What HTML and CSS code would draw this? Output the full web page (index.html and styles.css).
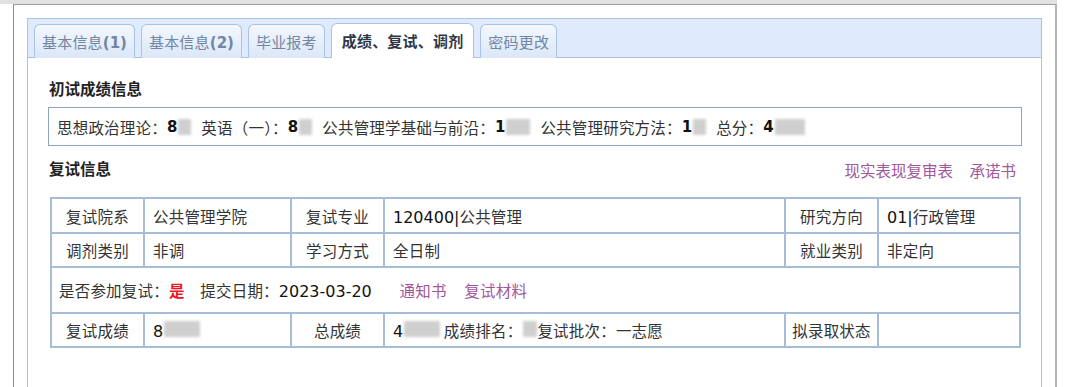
FILE: index.html
```html
<!DOCTYPE html>
<html>
<head>
  <title>成绩、复试、调剂</title>
  <meta charset="utf-8">
  <link rel="stylesheet" href="styles.css">
</head>
<body>
  <div class="topband"></div>
  <div class="frame">
    <div class="panel">
      <div class="tabs">
        <div class="tab">基本信息<span class="num">(1)</span></div>
        <div class="tab">基本信息<span class="num">(2)</span></div>
        <div class="tab">毕业报考</div>
        <div class="tab active">成绩、复试、调剂</div>
        <div class="tab">密码更改</div>
      </div>

      <div class="content">
        <div class="heading">初试成绩信息</div>
        <div class="scores">
          <span class="item">思想政治理论：<b class="digit">8</b><i class="blur w1"></i></span>
          <span class="item">英语（一）：<b class="digit">8</b><i class="blur w1"></i></span>
          <span class="item">公共管理学基础与前沿：<b class="digit">1</b><i class="blur w2"></i></span>
          <span class="item">公共管理研究方法：<b class="digit">1</b><i class="blur w1"></i></span>
          <span class="item">总分：<b class="digit">4</b><i class="blur w3"></i></span>
        </div>

        <div class="section-row">
          <div class="heading">复试信息</div>
          <div class="links">
            <a href="#">现实表现复审表</a>
            <a href="#">承诺书</a>
          </div>
        </div>

        <table class="info">
          <colgroup>
            <col class="c1"><col class="c2"><col class="c3">
            <col class="c4"><col class="c5"><col class="c6">
          </colgroup>
          <tr class="r1">
            <th>复试院系</th>
            <td>公共管理学院</td>
            <th>复试专业</th>
            <td><span class="code">120400|</span>公共管理</td>
            <th>研究方向</th>
            <td><span class="code">01|</span>行政管理</td>
          </tr>
          <tr class="r2">
            <th>调剂类别</th>
            <td>非调</td>
            <th>学习方式</th>
            <td>全日制</td>
            <th>就业类别</th>
            <td>非定向</td>
          </tr>
          <tr class="wide">
            <td colspan="6">
              是否参加复试：<span class="yes">是</span>
              <span class="gap">提交日期：<span class="code">2023-03-20</span></span>
              <a href="#" class="gap2">通知书</a>
              <a href="#" class="gap3">复试材料</a>
            </td>
          </tr>
          <tr class="r4">
            <th>复试成绩</th>
            <td><span class="code">8</span><i class="blur w4"></i></td>
            <th>总成绩</th>
            <td><span class="code">4</span><i class="blur w4"></i> 成绩排名：<i class="blur w5"></i>复试批次：一志愿</td>
            <th>拟录取状态</th>
            <td></td>
          </tr>
        </table>
      </div>
    </div>
  </div>
</body>
</html>
```

FILE: styles.css
```css
body {
  margin: 0;
  background: #fff;
  font-family: "Noto Sans CJK SC", "Noto Sans", sans-serif;
  color: #333;
}
.topband {
  width: 1057px;
  height: 4px;
  background: #e2e2e2;
}
.frame {
  margin-left: 13px;
  width: 1044px;
  height: 383px;
  border: 1px solid #a0a0a0;
  border-left-color: #8c8c8c;
  border-right: 2px solid #b4b4b4;
  border-bottom: none;
  padding: 13px 0 0 13px;
  box-sizing: border-box;
}
.panel {
  width: 1015px;
  height: 370px;
  border: 1px solid #a9c3e6;
  border-bottom: none;
  box-sizing: border-box;
}
.tabs {
  height: 38px;
  background: #dfeafc;
  border-bottom: 1px solid #a9c3e6;
  display: flex;
  align-items: flex-end;
  padding-left: 6px;
  gap: 6px;
}
.tab {
  height: 33px;
  margin-bottom: -1px;
  padding: 0 7px;
  border: 1px solid #a9c3e6;
  border-bottom: none;
  border-radius: 6px 6px 0 0;
  background: linear-gradient(#f3f7fd, #dbe7f8);
  color: #7186a4;
  font-size: 15px;
  line-height: 34px;
  letter-spacing: 0.2px;
  white-space: nowrap;
}
.tab .num {
  font-family: "DejaVu Sans", sans-serif;
  font-weight: bold;
  font-size: 15px;
  letter-spacing: 0;
}
.tab.active {
  background: #fff;
  height: 34px;
  padding: 0 10px;
  color: #2e3747;
  font-weight: bold;
}
.content {
  padding: 20px 19px 0 20px;
}
.heading {
  font-size: 15.5px;
  font-weight: bold;
  color: #222;
  line-height: 20px;
  margin: 0 0 9px 1px;
}
.scores {
  height: 39px;
  border: 1px solid #8ea5c2;
  box-sizing: border-box;
  display: flex;
  align-items: center;
  padding-left: 8px;
  font-size: 15.5px;
  letter-spacing: 0.2px;
  color: #333;
}
.item {
  margin-right: 10px;
  display: flex;
  align-items: center;
}
.digit, .code {
  font-family: "DejaVu Sans", sans-serif;
  color: #111;
  letter-spacing: 0;
}
.digit {
  font-weight: bold;
  font-size: 15px;
}
.blur {
  display: inline-block;
  height: 16px;
  background: #cfcfcf;
  filter: blur(1.5px);
  margin-left: 1px;
}
.w1 { width: 13px; }
.w2 { width: 24px; }
.w3 { width: 30px; }
.w4 { width: 36px; }
.w5 { width: 14px; }
.section-row {
  display: flex;
  justify-content: space-between;
  align-items: center;
  height: 20px;
  margin-top: 12px;
  margin-bottom: 19px;
}
.section-row .heading {
  margin: 0 0 0 1px;
}
.links {
  line-height: 20px;
  margin-top: 3px;
  margin-right: 6px;
}
.links a, .info a {
  color: #a2579c;
  text-decoration: none;
  font-size: 15.5px;
}
.links a + a {
  margin-left: 13px;
}
.info {
  margin-left: 2px;
  width: 969px;
  table-layout: fixed;
  border-collapse: collapse;
  border: 2px solid #8ca5c4;
  font-size: 15.5px;
  letter-spacing: 0.2px;
  color: #333;
}
.info .c1, .info .c3, .info .c5 { width: 93px; }
.info .c2 { width: 147px; }
.info .c4 { width: 401px; }
.info .c6 { width: 142px; }
.info th, .info td {
  border: 2px solid #a7bdd7;
  padding: 0 8px;
  text-align: left;
  white-space: nowrap;
}
.info th {
  font-weight: normal;
  text-align: center;
  padding: 0 4px;
}
.info tr.r1 { height: 35px; }
.info tr.r2 { height: 34px; }
.info tr.wide { height: 46px; }
.info tr.r4 { height: 34px; }
.info tr.wide td {
  padding-left: 7px;
}
.code {
  font-size: 16px;
}
.yes {
  color: #f0141e;
  font-weight: bold;
}
.gap { margin-left: 12px; }
.gap2 { margin-left: 24px; }
.gap3 { margin-left: 14px; }
```
